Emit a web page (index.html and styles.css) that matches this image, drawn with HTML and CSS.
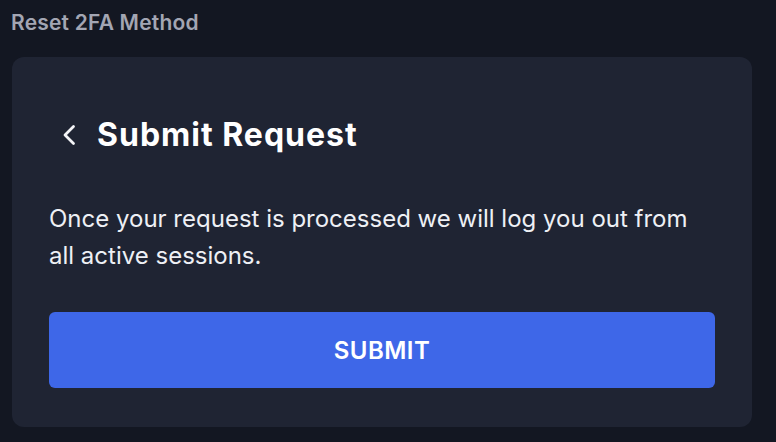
FILE: index.html
```html
<!DOCTYPE html>
<html>
<head>
<meta charset="utf-8">
<link rel="stylesheet" href="styles.css">
</head>
<body>
<div class="page">
  <h2 class="section-title">Reset 2FA Method</h2>
  <div class="card">
    <div class="card-head">
      <button class="back" aria-label="Back">
        <svg width="14" height="22" viewBox="0 0 14 22"><path d="M11.5 2.5 L3 11 L11.5 19.5" fill="none" stroke="#f4f5f8" stroke-width="2.8" stroke-linecap="round" stroke-linejoin="round"/></svg>
      </button>
      <h1 class="card-title">Submit Request</h1>
    </div>
    <p class="card-text">Once your request is processed we will log you out from all active sessions.</p>
    <button class="submit">SUBMIT</button>
  </div>
</div>
</body>
</html>
```
FILE: styles.css
```css
html, body {
  margin: 0;
  padding: 0;
  background: #131722;
  font-family: "Inter", "Noto Sans", sans-serif;
}
.page {
  padding: 8px 24px 0 12px;
}
.section-title {
  margin: 0 0 19px -1px;
  font-size: 21px;
  line-height: 30px;
  font-weight: 600;
  letter-spacing: 0.2px;
  color: #a3a6b3;
}
.card {
  background: #1f2433;
  border-radius: 12px;
  padding: 58px 37px 39px 37px;
  display: flex;
  flex-direction: column;
}
.card-head {
  display: flex;
  align-items: center;
  gap: 21px;
  height: 40px;
}
.back {
  background: none;
  border: 0;
  padding: 0 0 0 13px;
  display: flex;
  align-items: center;
  cursor: pointer;
}
.card-title {
  margin: 0;
  font-size: 32px;
  font-weight: 700;
  letter-spacing: 1px;
  color: #ffffff;
  line-height: 40px;
}
.card-text {
  margin: 45px 0 0 0;
  font-size: 24px;
  line-height: 37px;
  color: #eef0f5;
}
.submit {
  margin-top: 38px;
  height: 76px;
  border: 0;
  border-radius: 6px;
  background: #3e67e8;
  color: #ffffff;
  font-family: inherit;
  font-size: 24px;
  font-weight: 600;
  letter-spacing: 0.5px;
  cursor: pointer;
}
```
